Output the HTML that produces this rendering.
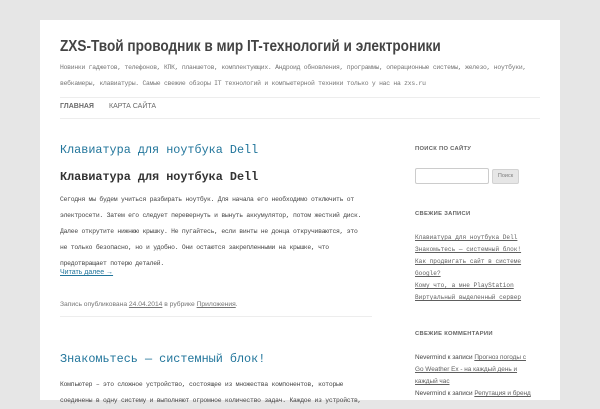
<!DOCTYPE html>
<html><head><meta charset="utf-8"><style>
*{margin:0;padding:0;box-sizing:border-box}
body{width:600px;height:400px;overflow:hidden;background:#e6e6e6;font-family:"Liberation Sans","DejaVu Sans",sans-serif;position:relative}
#page{position:absolute;left:40px;top:20px;width:520px;height:380px;background:#fff}
.a{position:absolute;white-space:nowrap}
.mono{font-family:"Liberation Mono","DejaVu Sans Mono",monospace}
.p{font-size:6.4px;letter-spacing:-0.25px}
.line{position:absolute;height:1px;background:#ededed}
.sb a{color:#5e5e5e;text-decoration:underline}
</style></head><body>
<div id="page">
<div class="a" style="left:20px;top:18px;font-size:16px;font-weight:bold;color:#444;transform:scaleX(0.85);transform-origin:left top">ZXS-Твой проводник в мир IT-технологий и электроники</div>
<div class="a mono p" style="left:20px;top:40px;line-height:16px;color:#757575;white-space:normal;width:490px">Новинки гаджетов, телефонов, КПК, планшетов, комплектующих. Андроид обновления, программы, операционные системы, железо, ноутбуки, вебкамеры, клавиатуры. Самые свежие обзоры IT технологий и компьютерной техники только у нас на zxs.ru</div>
<div class="line" style="left:20px;top:77px;width:480px"></div>
<div class="a" style="left:20px;top:83px;font-size:7px;font-weight:bold;color:#6a6a6a">ГЛАВНАЯ</div>
<div class="a" style="left:69px;top:83px;font-size:7px;color:#6a6a6a">КАРТА САЙТА</div>
<div class="line" style="left:20px;top:98px;width:480px"></div>

<div class="a mono" style="left:20px;top:123px;font-size:11.8px;color:#21759b">Клавиатура для ноутбука Dell</div>
<div class="a mono" style="left:20px;top:150px;font-size:11.8px;font-weight:bold;color:#333">Клавиатура для ноутбука Dell</div>
<div class="a mono p" style="left:20px;top:172px;line-height:16px;color:#444;white-space:normal;width:306px">Сегодня мы будем учиться разбирать ноутбук. Для начала его необходимо отключить от электросети. Затем его следует перевернуть и вынуть аккумулятор, потом жесткий диск. Далее открутите нижнюю крышку. Не пугайтесь, если винты не донца откручиваются, это не только безопасно, но и удобно. Они остаются закрепленными на крышке, что предотвращает потерю деталей.</div>
<div class="a" style="left:20px;top:249px;font-size:7px;color:#21759b;text-decoration:underline">Читать далее →</div>
<div class="a" style="left:20px;top:281px;font-size:6.7px;color:#757575">Запись опубликована <u>24.04.2014</u> в рубрике <u>Приложения</u>.</div>
<div class="line" style="left:20px;top:296px;width:312px;height:1px"></div>
<div class="a mono" style="left:20px;top:332px;font-size:11.8px;color:#21759b">Знакомьтесь — системный блок!</div>
<div class="a mono p" style="left:20px;top:357px;line-height:16px;color:#444;white-space:normal;width:318px">Компьютер – это сложное устройство, состоящее из множества компонентов, которые соединены в одну систему и  выполняют огромное количество задач. Каждое из устройств,</div>

<div class="sb">
<div class="a" style="left:375px;top:126px;font-size:5.8px;font-weight:bold;color:#636363;letter-spacing:0.3px">ПОИСК ПО САЙТУ</div>
<div class="a" style="left:375px;top:148px;width:74px;height:16px;border:1px solid #ccc;border-radius:2px"></div>
<div class="a" style="left:452px;top:149px;width:27px;height:15px;background:#e6e6e6;border:1px solid #d2d2d2;border-radius:2px;font-size:5.5px;color:#7c7c7c;text-align:center;line-height:13px">Поиск</div>
<div class="a" style="left:375px;top:191px;font-size:5.8px;font-weight:bold;color:#636363;letter-spacing:0.3px">СВЕЖИЕ ЗАПИСИ</div>
<div class="a mono" style="left:375px;top:212px;font-size:6.1px;line-height:12px;color:#5e5e5e">
<a>Клавиатура для ноутбука Dell</a><br><a>Знакомьтесь — системный блок!</a><br><a>Как продвигать сайт в системе</a><br><a>Google?</a><br><a>Кому что, а мне PlayStation</a><br><a>Виртуальный выделенный сервер</a></div>
<div class="a" style="left:375px;top:311px;font-size:5.8px;font-weight:bold;color:#636363;letter-spacing:0.3px">СВЕЖИЕ КОММЕНТАРИИ</div>
<div class="a" style="left:375px;top:332px;font-size:6.4px;line-height:12px;color:#444">Nevermind к записи <a>Прогноз погоды с</a><br><a>Go Weather Ex - на каждый день и</a><br><a>каждый час</a><br>Nevermind к записи <a>Репутация и бренд</a></div>
</div>
</div>
</body></html>
